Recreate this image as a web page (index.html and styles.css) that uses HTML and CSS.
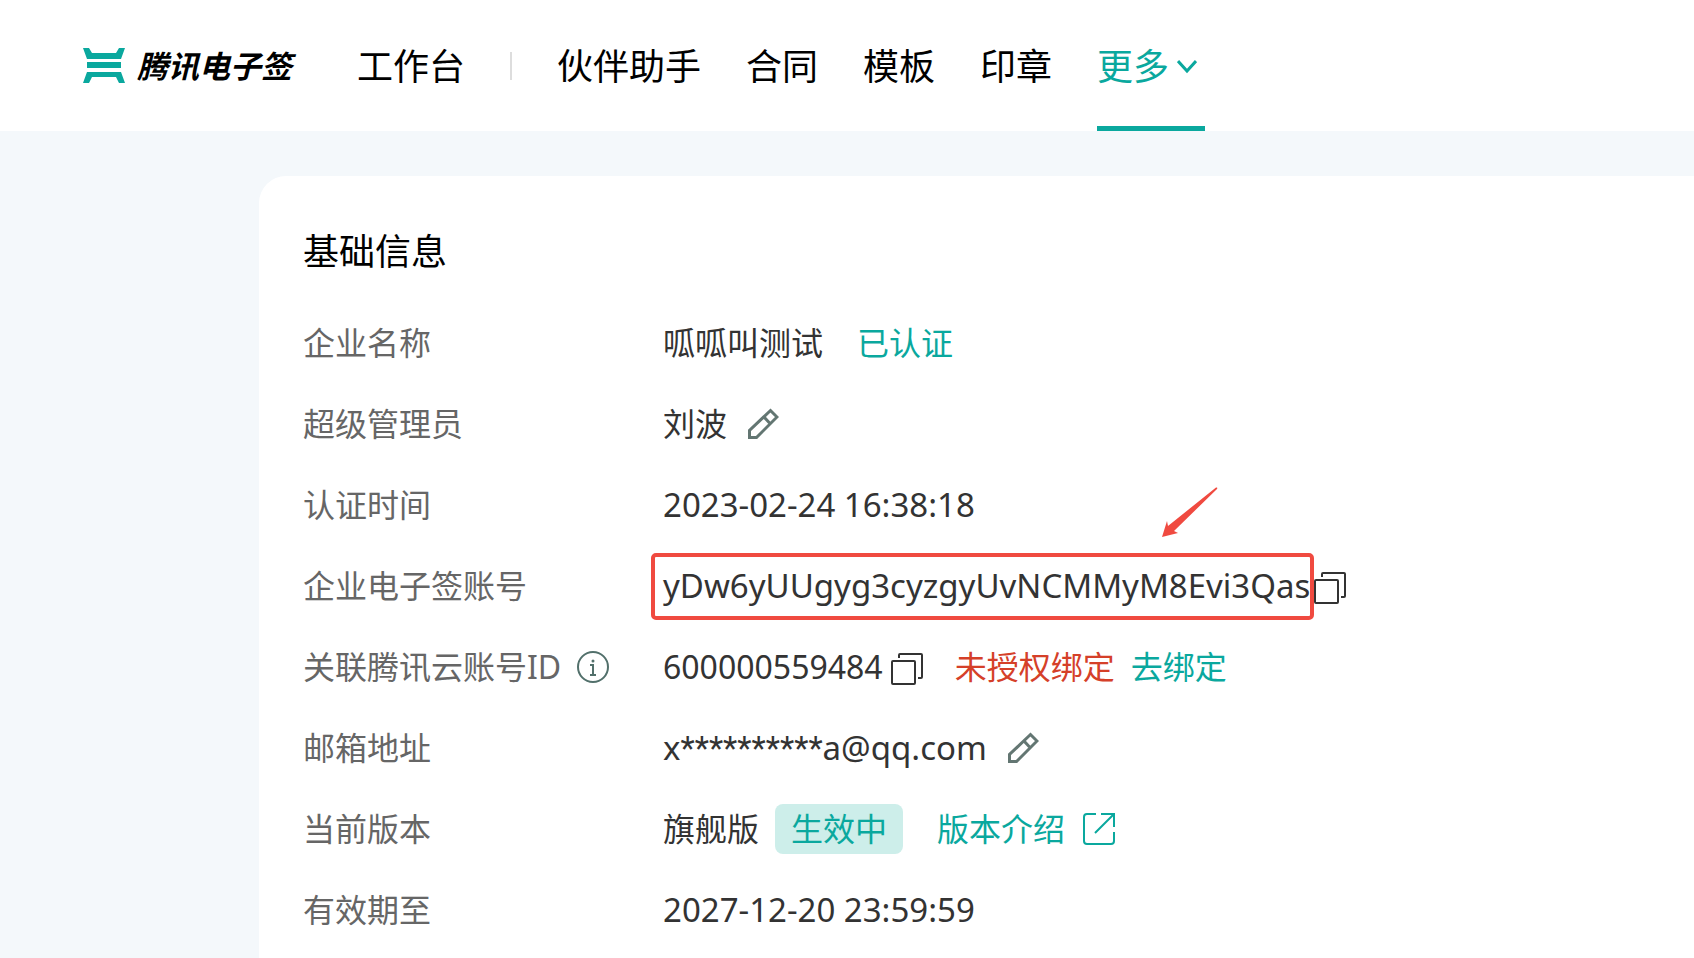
FILE: index.html
```html
<!DOCTYPE html>
<html lang="zh-CN">
<head>
<meta charset="utf-8">
<meta name="viewport" content="width=device-width, initial-scale=1">
<title>腾讯电子签</title>
<link rel="stylesheet" href="styles.css">
</head>
<body>
<svg class="sprite" aria-hidden="true">
  <symbol id="i-pencil" viewBox="0 0 32 32"><path d="M2.500 29.500V22.500L23.500 2.500L30 9L9.500 29.500ZM17 9L23 15.500" /></symbol>
  <symbol id="i-copy" viewBox="0 0 32 32"><rect x="1" y="8" width="23" height="23" rx="1"/><path d="M8 5V2Q8 1 9 1H30Q31 1 31 2V24Q31 25 30 25H27"/></symbol>
</svg>
<header class="topbar">
  <a class="brand" href="#">
    <svg class="brand-mark" viewBox="0 0 42 35" aria-hidden="true"><path d="M0 0H6L9 5H33L36 0H42L38 11H4ZM4 14H38V20H4ZM4 24H38L42 35H36L33 29H9L6 35H0Z"/></svg>
    <span class="brand-name">腾讯电子签</span>
  </a>
  <nav class="nav">
    <a class="nav-item" href="#">工作台</a>
    <span class="divider"></span>
    <a class="nav-item" href="#">伙伴助手</a>
    <a class="nav-item" href="#">合同</a>
    <a class="nav-item" href="#">模板</a>
    <a class="nav-item" href="#">印章</a>
    <button class="nav-item nav-more" type="button">更多<svg class="chevron" viewBox="0 0 20 16" aria-hidden="true"><path d="M1 2L10 12L19 2"/></svg></button>
  </nav>
</header>
<main class="page">
  <section class="card">
    <h1 class="card-title">基础信息</h1>
    <dl class="info">
      <dt>企业名称</dt>
      <dd><span>呱呱叫测试</span><span class="verified">已认证</span></dd>
      <dt>超级管理员</dt>
      <dd><span>刘波</span><button class="icon-button edit" type="button" aria-label="修改超级管理员"><svg class="icon"><use href="#i-pencil"/></svg></button></dd>
      <dt>认证时间</dt>
      <dd><span class="latin">2023-02-24 16:38:18</span></dd>
      <dt>企业电子签账号</dt>
      <dd>
        <span class="account latin">yDw6yUUgyg3cyzgyUvNCMMyM8Evi3Qas<svg class="arrow" viewBox="0 0 56 50" aria-hidden="true"><path d="M0 50L5 34L6 39L54 0.500Q56 0 55 2L12 44L16 46Z"/></svg></span>
        <button class="icon-button copy copy-account" type="button" aria-label="复制企业电子签账号"><svg class="icon"><use href="#i-copy"/></svg></button>
      </dd>
      <dt>关联腾讯云账号ID<svg class="icon info-icon" viewBox="0 0 32 32" aria-hidden="true"><circle cx="16" cy="16" r="15"/><path d="M13 14H16V24M13 24H19"/><circle class="dot" cx="16" cy="10" r="1.500"/></svg></dt>
      <dd><span>600000559484</span><button class="icon-button copy" type="button" aria-label="复制腾讯云账号ID"><svg class="icon"><use href="#i-copy"/></svg></button><span class="unbound">未授权绑定</span><a class="link bind" href="#">去绑定</a></dd>
      <dt>邮箱地址</dt>
      <dd><span class="latin">x<span class="mask">**********</span>a@qq.com</span><button class="icon-button edit" type="button" aria-label="修改邮箱地址"><svg class="icon"><use href="#i-pencil"/></svg></button></dd>
      <dt>当前版本</dt>
      <dd><span>旗舰版</span><span class="badge">生效中</span><a class="link intro" href="#">版本介绍<svg class="icon" viewBox="0 0 32 32" aria-hidden="true"><path d="M13 1H4Q1 1 1 4V28Q1 31 4 31H28Q31 31 31 28V19M18 1H31V14M31 1L12 20"/></svg></a></dd>
      <dt>有效期至</dt>
      <dd><span class="latin">2027-12-20 23:59:59</span></dd>
    </dl>
  </section>
</main>
</body>
</html>
```

FILE: styles.css
```css
:root {
  --teal: #0aa89e;
  --red: #f04a40;
}

* {
  box-sizing: border-box;
}

body {
  display: flex;
  flex-direction: column;
  min-height: 100vh;
  margin: 0;
  overflow: hidden;
  background: #f4f8fb;
  color: #333;
  font: 32px/48px "Noto Sans", "Noto Sans CJK SC", sans-serif;
}

a {
  color: inherit;
  text-decoration: none;
}

button {
  padding: 0;
  border: 0;
  background: none;
  color: inherit;
  font: inherit;
}

.sprite {
  position: absolute;
  width: 0;
  height: 0;
}

.topbar {
  display: flex;
  gap: 60px;
  height: 131px;
  padding-left: 83px;
  background: #fff;
  color: #000;
}

.brand {
  display: flex;
  align-items: center;
  gap: 12px;
}

.brand-mark {
  width: 42px;
  height: 35px;
  fill: var(--teal);
}

.brand-name {
  width: 160px;
  font-size: 31px;
  font-style: italic;
  font-weight: 700;
  white-space: nowrap;
}

.nav {
  display: flex;
  align-items: center;
  gap: 45px;
  font-size: 36px;
  white-space: nowrap;
}

.nav-item {
  display: flex;
  align-items: center;
  height: 100%;
  padding-top: 2px;
}

.divider {
  width: 2px;
  height: 28px;
  background: #ddd;
}

.nav-more {
  gap: 8px;
  padding-right: 8px;
  box-shadow: inset 0 -5px var(--teal);
  color: var(--teal);
}

.chevron {
  width: 20px;
  height: 16px;
  fill: none;
  stroke: currentColor;
  stroke-width: 3;
}

.page {
  display: flex;
  flex: 1;
  padding: 45px 0 0 259px;
}

.card {
  flex: 1;
  padding: 52px 44px 24px;
  border-radius: 27px 0 0 0;
  background: #fff;
}

.card-title {
  margin: 0 0 43px;
  color: #000;
  font-size: 36px;
  font-weight: 400;
  line-height: 48px;
}

.info {
  display: grid;
  grid-template-columns: 360px 1fr;
  row-gap: 33px;
  margin: 0;
  white-space: nowrap;
}

.info dt,
.info dd {
  display: flex;
  align-items: center;
  height: 48px;
  margin: 0;
}

.info dt {
  color: #666;
}

.latin {
  font-size: 33px;
}

.mask {
  font-family: Roboto, sans-serif;
}

.icon {
  display: block;
  width: 32px;
  height: 32px;
  fill: none;
  stroke: currentColor;
  stroke-width: 2;
}

.icon-button {
  display: flex;
}

.edit {
  margin-left: 20px;
  color: #637672;
}

.edit .icon {
  stroke-width: 3;
}

.copy {
  margin-left: 8px;
  padding-top: 4px;
}

.copy-account {
  margin-left: 4px;
}

.info-icon {
  margin-left: 16px;
  color: #52706b;
}

.info-icon .dot {
  fill: currentColor;
  stroke: none;
}

.verified {
  margin-left: 34px;
  color: var(--teal);
}

.unbound {
  margin-left: 32px;
  color: #d54029;
}

.link {
  color: var(--teal);
}

.bind {
  margin-left: 16px;
}

.badge {
  margin-left: 16px;
  padding: 1px 16px;
  border-radius: 8px;
  background: #cdeeea;
  color: var(--teal);
}

.intro {
  display: flex;
  align-items: center;
  gap: 18px;
  margin-left: 34px;
}

/* Highlight frame and pointer drawn over the account number */
.account {
  position: relative;
}

.account::after {
  content: "";
  position: absolute;
  inset: -9px -4px -10px -12px;
  border: 4px solid var(--red);
  border-radius: 5px;
}

.arrow {
  position: absolute;
  right: 92px;
  bottom: 73px;
  width: 56px;
  height: 50px;
  fill: var(--red);
}
```
